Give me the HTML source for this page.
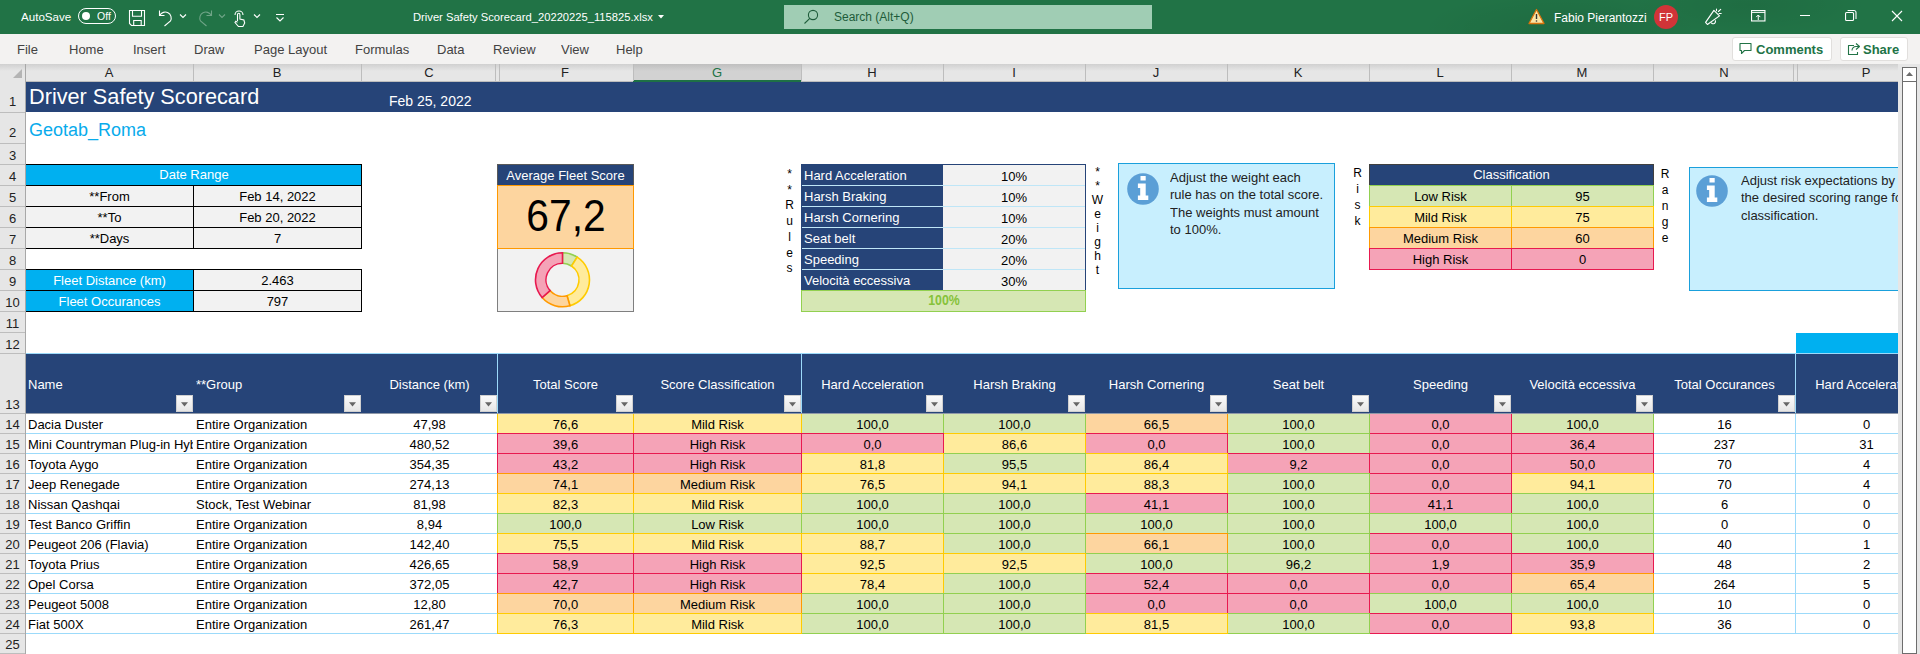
<!DOCTYPE html>
<html><head><meta charset="utf-8"><style>
html,body{margin:0;padding:0;}
body{width:1920px;height:654px;overflow:hidden;position:relative;background:#fff;font-family:"Liberation Sans", sans-serif;}
body div{position:absolute;box-sizing:border-box;}
.t{white-space:nowrap;overflow:hidden;font-size:13px;color:#000;}
svg{position:absolute;}
</style></head><body>
<div style="left:0px;top:0px;width:1920px;height:34px;background:#217346"></div><div style="left:1420px;top:0px;width:500px;height:34px;background:radial-gradient(ellipse 140px 40px at 140px 30px,rgba(0,0,0,.07),rgba(0,0,0,0) 100%),radial-gradient(ellipse 120px 30px at 330px 5px,rgba(0,0,0,.06),rgba(0,0,0,0) 100%)"></div><div class="t" style="left:21px;top:0px;width:60px;height:34px;line-height:34px;text-align:left;color:#ffffff;font-size:11.6px;line-height:34px">AutoSave</div><div style="left:78px;top:8px;width:38px;height:16px;border:1.3px solid #fff;border-radius:8px"></div><div style="left:82px;top:12px;width:8px;height:8px;background:#fff;border-radius:50%"></div><div class="t" style="left:97px;top:0px;width:20px;height:33px;line-height:33px;text-align:left;color:#ffffff;font-size:10.5px;line-height:33px">Off</div><svg style="left:128px;top:9px" width="18" height="18" viewBox="0 0 18 18"><path d="M1.5 1.5H16.5V16.5H3.5L1.5 14.5Z" fill="none" stroke="#fff" stroke-width="1.1"/><path d="M4.5 1.5V7.3H13.5V1.5M5.7 16.5V11.5H13.2V16.5" fill="none" stroke="#fff" stroke-width="1.1"/></svg><svg style="left:157px;top:9px" width="18" height="18" viewBox="0 0 18 18"><path d="M2.5 1.5v5h5" fill="none" stroke="#fff" stroke-width="1.1"/><path d="M2.8 6.3A6 6 0 1 1 13.5 12L7.5 17" fill="none" stroke="#fff" stroke-width="1.1"/></svg><svg style="left:179px;top:13px" width="8" height="6" viewBox="0 0 8 6"><path d="M1 1.5l3 3 3-3" fill="none" stroke="#fff" stroke-width="1.1"/></svg><svg style="left:196px;top:9px;opacity:.35" width="18" height="18" viewBox="0 0 18 18"><path d="M15.5 1.5v5h-5" fill="none" stroke="#fff" stroke-width="1.1"/><path d="M15.2 6.3A6 6 0 1 0 4.5 12L10.5 17" fill="none" stroke="#fff" stroke-width="1.1"/></svg><svg style="left:218px;top:13px;opacity:.35" width="8" height="6" viewBox="0 0 8 6"><path d="M1 1.5l3 3 3-3" fill="none" stroke="#fff" stroke-width="1.1"/></svg><svg style="left:232px;top:9px" width="16" height="18" viewBox="0 0 16 18"><path d="M3 6A4 4 0 0 1 11 6" fill="none" stroke="#fff" stroke-width="1.1"/><path d="M5.5 12V5.5a1.2 1.2 0 0 1 2.4 0V10l4 1 .8 3-1.8 3.5H6.5L3 13.5l.8-1.2 1.7 1" fill="none" stroke="#fff" stroke-width="1.1"/></svg><svg style="left:253px;top:13px" width="8" height="6" viewBox="0 0 8 6"><path d="M1 1.5l3 3 3-3" fill="none" stroke="#fff" stroke-width="1.1"/></svg><svg style="left:275px;top:13px" width="10" height="10" viewBox="0 0 10 10"><path d="M1 1.5h8M1.5 4.5l3.5 3.5 3.5-3.5" fill="none" stroke="#fff" stroke-width="1.1"/></svg><div class="t" style="left:413px;top:0px;width:250px;height:34px;line-height:34px;text-align:left;color:#ffffff;font-size:11.2px">Driver Safety Scorecard_20220225_115825.xlsx</div><svg style="left:658px;top:15px" width="6" height="4" viewBox="0 0 6 4"><path d="M0 0h6L3 3.5z" fill="#fff"/></svg><div style="left:784px;top:5px;width:368px;height:24px;background:#a0cdb4"></div><svg style="left:803px;top:9px" width="16" height="16" viewBox="0 0 16 16"><circle cx="10" cy="6" r="4.6" fill="none" stroke="#1e5c3a" stroke-width="1.1"/><path d="M6.8 9.3L1.5 14.5" stroke="#1e5c3a" stroke-width="1.1"/></svg><div class="t" style="left:834px;top:0px;width:100px;height:34px;line-height:34px;text-align:left;color:#1e5c3a;font-size:12px">Search (Alt+Q)</div><svg style="left:1528px;top:8px" width="17" height="17" viewBox="0 0 17 17"><path d="M8.5 1.5L16 15.5H1z" fill="#fbe5a5" stroke="#d9730d" stroke-width="1.3" stroke-linejoin="round"/><path d="M8.5 6v5" stroke="#333" stroke-width="1.4"/><circle cx="8.5" cy="13" r=".8" fill="#333"/></svg><div class="t" style="left:1554px;top:1px;width:100px;height:34px;line-height:34px;text-align:left;color:#ffffff;font-size:12px">Fabio Pierantozzi</div><div style="left:1654px;top:5px;width:24px;height:24px;background:#d13438;border-radius:50%"></div><div class="t" style="left:1654px;top:5px;width:24px;height:24px;line-height:24px;text-align:center;color:#fff;font-size:11px">FP</div><svg style="left:1700px;top:4px" width="28" height="26" viewBox="0 0 28 26"><path d="M5.6 18.3L13.9 6.4L19.5 11.9L7.4 20.5Z" fill="none" stroke="#fff" stroke-width="1.15" stroke-linejoin="round"/><path d="M11.2 18.6A2.2 2.2 0 0 0 15.2 16.4" fill="none" stroke="#fff" stroke-width="1.15"/><path d="M16.5 5V6.7M18.4 7.5L20.7 5.3M19.1 9.5H21.2" stroke="#fff" stroke-width="1.1" stroke-linecap="round"/></svg><svg style="left:1751px;top:10px" width="15" height="12" viewBox="0 0 15 12"><rect x=".55" y=".55" width="13.4" height="10.4" fill="none" stroke="#fff" stroke-width="1.1"/><path d="M.6 2.4h13.4M7.25 10V5.2M5.2 7.1L7.25 5L9.3 7.1" fill="none" stroke="#fff" stroke-width="1"/></svg><div style="left:1800px;top:15px;width:10px;height:1px;background:#fff"></div><svg style="left:1845px;top:10px" width="12" height="12" viewBox="0 0 12 12"><rect x=".55" y="2.55" width="8" height="8" rx="1" fill="none" stroke="#fff" stroke-width="1.1"/><path d="M2.6 .55h6.4a2 2 0 0 1 2 2v6.4" fill="none" stroke="#fff" stroke-width="1.1"/></svg><svg style="left:1891px;top:10px" width="12" height="12" viewBox="0 0 12 12"><path d="M1 1l10 10M11 1L1 11" stroke="#fff" stroke-width="1.1"/></svg><div style="left:0px;top:34px;width:1920px;height:30px;background:#f3f2f1"></div><div class="t" style="left:17px;top:34px;width:120px;height:30px;line-height:30px;text-align:left;color:#424242;font-size:13px;line-height:31px">File</div><div class="t" style="left:69px;top:34px;width:120px;height:30px;line-height:30px;text-align:left;color:#424242;font-size:13px;line-height:31px">Home</div><div class="t" style="left:133px;top:34px;width:120px;height:30px;line-height:30px;text-align:left;color:#424242;font-size:13px;line-height:31px">Insert</div><div class="t" style="left:194px;top:34px;width:120px;height:30px;line-height:30px;text-align:left;color:#424242;font-size:13px;line-height:31px">Draw</div><div class="t" style="left:254px;top:34px;width:120px;height:30px;line-height:30px;text-align:left;color:#424242;font-size:13px;line-height:31px">Page Layout</div><div class="t" style="left:355px;top:34px;width:120px;height:30px;line-height:30px;text-align:left;color:#424242;font-size:13px;line-height:31px">Formulas</div><div class="t" style="left:437px;top:34px;width:120px;height:30px;line-height:30px;text-align:left;color:#424242;font-size:13px;line-height:31px">Data</div><div class="t" style="left:493px;top:34px;width:120px;height:30px;line-height:30px;text-align:left;color:#424242;font-size:13px;line-height:31px">Review</div><div class="t" style="left:561px;top:34px;width:120px;height:30px;line-height:30px;text-align:left;color:#424242;font-size:13px;line-height:31px">View</div><div class="t" style="left:616px;top:34px;width:120px;height:30px;line-height:30px;text-align:left;color:#424242;font-size:13px;line-height:31px">Help</div><div style="left:1732px;top:37px;width:100px;height:24px;background:#fff;border:1px solid #e1dfdd;border-radius:3px"></div><svg style="left:1739px;top:42px" width="14" height="14" viewBox="0 0 14 14"><path d="M1 1.5h11v7H5.5L2.5 11.5V8.5H1z" fill="none" stroke="#217346" stroke-width="1.1" stroke-linejoin="round"/></svg><div class="t" style="left:1756px;top:38px;width:80px;height:23px;line-height:23px;text-align:left;color:#217346;font-size:13px;font-weight:bold">Comments</div><div style="left:1840px;top:37px;width:68px;height:24px;background:#fff;border:1px solid #e1dfdd;border-radius:3px"></div><svg style="left:1847px;top:42px" width="14" height="14" viewBox="0 0 14 14"><path d="M9 1.5l3.5 3-3.5 3M12.5 4.5H9a4 4 0 0 0-4 4M7 3.5H1.5v9h9V10" fill="none" stroke="#217346" stroke-width="1.1" stroke-linejoin="round"/></svg><div class="t" style="left:1863px;top:38px;width:50px;height:23px;line-height:23px;text-align:left;color:#217346;font-size:13px;font-weight:bold">Share</div><div style="left:0px;top:64px;width:1898px;height:18px;background:#e6e6e6;border-bottom:1px solid #bdbdbd"></div><div style="left:0px;top:64px;width:1898px;height:7px;background:linear-gradient(#d0d0d0,#e6e6e6)"></div><svg style="left:13px;top:69px" width="9" height="9" viewBox="0 0 9 9"><path d="M9 0V9H0z" fill="#b4b4b4"/></svg><div style="left:25px;top:64px;width:1px;height:17px;background:#bdbdbd"></div><div style="left:633px;top:64px;width:168px;height:17px;background:linear-gradient(#bfbfbf,#d2d2d2 7px)"></div><div style="left:633px;top:80px;width:168px;height:2px;background:#1e7145"></div><div class="t" style="left:25px;top:64px;width:168px;height:17px;line-height:17px;text-align:center;font-size:13px;color:#222;line-height:18px">A</div><div class="t" style="left:193px;top:64px;width:168px;height:17px;line-height:17px;text-align:center;font-size:13px;color:#222;line-height:18px">B</div><div style="left:193px;top:64px;width:1px;height:17px;background:#bdbdbd"></div><div class="t" style="left:361px;top:64px;width:136px;height:17px;line-height:17px;text-align:center;font-size:13px;color:#222;line-height:18px">C</div><div style="left:361px;top:64px;width:1px;height:17px;background:#bdbdbd"></div><div class="t" style="left:497px;top:64px;width:136px;height:17px;line-height:17px;text-align:center;font-size:13px;color:#222;line-height:18px">F</div><div class="t" style="left:633px;top:64px;width:168px;height:17px;line-height:17px;text-align:center;font-size:13px;color:#217346;line-height:18px">G</div><div style="left:633px;top:64px;width:1px;height:17px;background:#bdbdbd"></div><div class="t" style="left:801px;top:64px;width:142px;height:17px;line-height:17px;text-align:center;font-size:13px;color:#222;line-height:18px">H</div><div style="left:801px;top:64px;width:1px;height:17px;background:#bdbdbd"></div><div class="t" style="left:943px;top:64px;width:142px;height:17px;line-height:17px;text-align:center;font-size:13px;color:#222;line-height:18px">I</div><div style="left:943px;top:64px;width:1px;height:17px;background:#bdbdbd"></div><div class="t" style="left:1085px;top:64px;width:142px;height:17px;line-height:17px;text-align:center;font-size:13px;color:#222;line-height:18px">J</div><div style="left:1085px;top:64px;width:1px;height:17px;background:#bdbdbd"></div><div class="t" style="left:1227px;top:64px;width:142px;height:17px;line-height:17px;text-align:center;font-size:13px;color:#222;line-height:18px">K</div><div style="left:1227px;top:64px;width:1px;height:17px;background:#bdbdbd"></div><div class="t" style="left:1369px;top:64px;width:142px;height:17px;line-height:17px;text-align:center;font-size:13px;color:#222;line-height:18px">L</div><div style="left:1369px;top:64px;width:1px;height:17px;background:#bdbdbd"></div><div class="t" style="left:1511px;top:64px;width:142px;height:17px;line-height:17px;text-align:center;font-size:13px;color:#222;line-height:18px">M</div><div style="left:1511px;top:64px;width:1px;height:17px;background:#bdbdbd"></div><div class="t" style="left:1653px;top:64px;width:142px;height:17px;line-height:17px;text-align:center;font-size:13px;color:#222;line-height:18px">N</div><div style="left:1653px;top:64px;width:1px;height:17px;background:#bdbdbd"></div><div class="t" style="left:1795px;top:64px;width:142px;height:17px;line-height:17px;text-align:center;font-size:13px;color:#222;line-height:18px">P</div><div style="left:495px;top:64px;width:1px;height:17px;background:#bdbdbd"></div><div style="left:499px;top:64px;width:1px;height:17px;background:#bdbdbd"></div><div style="left:1793px;top:64px;width:1px;height:17px;background:#bdbdbd"></div><div style="left:1797px;top:64px;width:1px;height:17px;background:#bdbdbd"></div><div style="left:0px;top:81px;width:26px;height:573px;background:#e6e6e6;border-right:1px solid #bdbdbd"></div><div style="left:0px;top:112px;width:25px;height:1px;background:#bdbdbd"></div><div class="t" style="left:0px;top:81px;width:25px;height:31px;line-height:31px;text-align:left;font-size:13px;color:#222;text-align:center;line-height:normal;display:flex;align-items:flex-end;justify-content:center;padding-bottom:3px">1</div><div style="left:0px;top:143px;width:25px;height:1px;background:#bdbdbd"></div><div class="t" style="left:0px;top:112px;width:25px;height:31px;line-height:31px;text-align:left;font-size:13px;color:#222;text-align:center;line-height:normal;display:flex;align-items:flex-end;justify-content:center;padding-bottom:3px">2</div><div style="left:0px;top:164px;width:25px;height:1px;background:#bdbdbd"></div><div class="t" style="left:0px;top:143px;width:25px;height:21px;line-height:21px;text-align:left;font-size:13px;color:#222;text-align:center;line-height:normal;display:flex;align-items:flex-end;justify-content:center;padding-bottom:1px">3</div><div style="left:0px;top:185px;width:25px;height:1px;background:#bdbdbd"></div><div class="t" style="left:0px;top:164px;width:25px;height:21px;line-height:21px;text-align:left;font-size:13px;color:#222;text-align:center;line-height:normal;display:flex;align-items:flex-end;justify-content:center;padding-bottom:1px">4</div><div style="left:0px;top:206px;width:25px;height:1px;background:#bdbdbd"></div><div class="t" style="left:0px;top:185px;width:25px;height:21px;line-height:21px;text-align:left;font-size:13px;color:#222;text-align:center;line-height:normal;display:flex;align-items:flex-end;justify-content:center;padding-bottom:1px">5</div><div style="left:0px;top:227px;width:25px;height:1px;background:#bdbdbd"></div><div class="t" style="left:0px;top:206px;width:25px;height:21px;line-height:21px;text-align:left;font-size:13px;color:#222;text-align:center;line-height:normal;display:flex;align-items:flex-end;justify-content:center;padding-bottom:1px">6</div><div style="left:0px;top:248px;width:25px;height:1px;background:#bdbdbd"></div><div class="t" style="left:0px;top:227px;width:25px;height:21px;line-height:21px;text-align:left;font-size:13px;color:#222;text-align:center;line-height:normal;display:flex;align-items:flex-end;justify-content:center;padding-bottom:1px">7</div><div style="left:0px;top:269px;width:25px;height:1px;background:#bdbdbd"></div><div class="t" style="left:0px;top:248px;width:25px;height:21px;line-height:21px;text-align:left;font-size:13px;color:#222;text-align:center;line-height:normal;display:flex;align-items:flex-end;justify-content:center;padding-bottom:1px">8</div><div style="left:0px;top:290px;width:25px;height:1px;background:#bdbdbd"></div><div class="t" style="left:0px;top:269px;width:25px;height:21px;line-height:21px;text-align:left;font-size:13px;color:#222;text-align:center;line-height:normal;display:flex;align-items:flex-end;justify-content:center;padding-bottom:1px">9</div><div style="left:0px;top:311px;width:25px;height:1px;background:#bdbdbd"></div><div class="t" style="left:0px;top:290px;width:25px;height:21px;line-height:21px;text-align:left;font-size:13px;color:#222;text-align:center;line-height:normal;display:flex;align-items:flex-end;justify-content:center;padding-bottom:1px">10</div><div style="left:0px;top:332px;width:25px;height:1px;background:#bdbdbd"></div><div class="t" style="left:0px;top:311px;width:25px;height:21px;line-height:21px;text-align:left;font-size:13px;color:#222;text-align:center;line-height:normal;display:flex;align-items:flex-end;justify-content:center;padding-bottom:1px">11</div><div style="left:0px;top:353px;width:25px;height:1px;background:#bdbdbd"></div><div class="t" style="left:0px;top:332px;width:25px;height:21px;line-height:21px;text-align:left;font-size:13px;color:#222;text-align:center;line-height:normal;display:flex;align-items:flex-end;justify-content:center;padding-bottom:1px">12</div><div style="left:0px;top:413px;width:25px;height:1px;background:#bdbdbd"></div><div class="t" style="left:0px;top:353px;width:25px;height:60px;line-height:60px;text-align:left;font-size:13px;color:#222;text-align:center;line-height:normal;display:flex;align-items:flex-end;justify-content:center;padding-bottom:1px">13</div><div style="left:0px;top:433px;width:25px;height:1px;background:#bdbdbd"></div><div class="t" style="left:0px;top:413px;width:25px;height:20px;line-height:20px;text-align:left;font-size:13px;color:#222;text-align:center;line-height:normal;display:flex;align-items:flex-end;justify-content:center;padding-bottom:1px">14</div><div style="left:0px;top:453px;width:25px;height:1px;background:#bdbdbd"></div><div class="t" style="left:0px;top:433px;width:25px;height:20px;line-height:20px;text-align:left;font-size:13px;color:#222;text-align:center;line-height:normal;display:flex;align-items:flex-end;justify-content:center;padding-bottom:1px">15</div><div style="left:0px;top:473px;width:25px;height:1px;background:#bdbdbd"></div><div class="t" style="left:0px;top:453px;width:25px;height:20px;line-height:20px;text-align:left;font-size:13px;color:#222;text-align:center;line-height:normal;display:flex;align-items:flex-end;justify-content:center;padding-bottom:1px">16</div><div style="left:0px;top:493px;width:25px;height:1px;background:#bdbdbd"></div><div class="t" style="left:0px;top:473px;width:25px;height:20px;line-height:20px;text-align:left;font-size:13px;color:#222;text-align:center;line-height:normal;display:flex;align-items:flex-end;justify-content:center;padding-bottom:1px">17</div><div style="left:0px;top:513px;width:25px;height:1px;background:#bdbdbd"></div><div class="t" style="left:0px;top:493px;width:25px;height:20px;line-height:20px;text-align:left;font-size:13px;color:#222;text-align:center;line-height:normal;display:flex;align-items:flex-end;justify-content:center;padding-bottom:1px">18</div><div style="left:0px;top:533px;width:25px;height:1px;background:#bdbdbd"></div><div class="t" style="left:0px;top:513px;width:25px;height:20px;line-height:20px;text-align:left;font-size:13px;color:#222;text-align:center;line-height:normal;display:flex;align-items:flex-end;justify-content:center;padding-bottom:1px">19</div><div style="left:0px;top:553px;width:25px;height:1px;background:#bdbdbd"></div><div class="t" style="left:0px;top:533px;width:25px;height:20px;line-height:20px;text-align:left;font-size:13px;color:#222;text-align:center;line-height:normal;display:flex;align-items:flex-end;justify-content:center;padding-bottom:1px">20</div><div style="left:0px;top:573px;width:25px;height:1px;background:#bdbdbd"></div><div class="t" style="left:0px;top:553px;width:25px;height:20px;line-height:20px;text-align:left;font-size:13px;color:#222;text-align:center;line-height:normal;display:flex;align-items:flex-end;justify-content:center;padding-bottom:1px">21</div><div style="left:0px;top:593px;width:25px;height:1px;background:#bdbdbd"></div><div class="t" style="left:0px;top:573px;width:25px;height:20px;line-height:20px;text-align:left;font-size:13px;color:#222;text-align:center;line-height:normal;display:flex;align-items:flex-end;justify-content:center;padding-bottom:1px">22</div><div style="left:0px;top:613px;width:25px;height:1px;background:#bdbdbd"></div><div class="t" style="left:0px;top:593px;width:25px;height:20px;line-height:20px;text-align:left;font-size:13px;color:#222;text-align:center;line-height:normal;display:flex;align-items:flex-end;justify-content:center;padding-bottom:1px">23</div><div style="left:0px;top:633px;width:25px;height:1px;background:#bdbdbd"></div><div class="t" style="left:0px;top:613px;width:25px;height:20px;line-height:20px;text-align:left;font-size:13px;color:#222;text-align:center;line-height:normal;display:flex;align-items:flex-end;justify-content:center;padding-bottom:1px">24</div><div style="left:0px;top:653px;width:25px;height:1px;background:#bdbdbd"></div><div class="t" style="left:0px;top:633px;width:25px;height:20px;line-height:20px;text-align:left;font-size:13px;color:#222;text-align:center;line-height:normal;display:flex;align-items:flex-end;justify-content:center;padding-bottom:1px">25</div><div style="left:1898px;top:64px;width:22px;height:590px;background:#e6e6e6"></div><div style="left:1902px;top:67px;width:15px;height:587px;background:#fff;border:1px solid #6d6d6d"></div><div style="left:1902px;top:81px;width:15px;height:1px;background:#6d6d6d"></div><svg style="left:1906px;top:72px" width="7" height="4" viewBox="0 0 7 4"><path d="M0 4L3.5 0L7 4z" fill="#6d6d6d"/></svg><div style="left:26px;top:82px;width:1872px;height:30px;background:#264478"></div><div class="t" style="left:29.00px;top:80.48px;width:600px;height:34px;line-height:34px;font-size:21.7px;text-align:left;color:#fff">Driver Safety Scorecard</div><div class="t" style="left:389.00px;top:90.15px;width:600px;height:22px;line-height:22px;font-size:14px;text-align:left;color:#fff">Feb 25, 2022</div><div class="t" style="left:29.00px;top:116.26px;width:600px;height:28px;line-height:28px;font-size:18px;text-align:left;color:#08abec">Geotab_Roma</div><div style="left:25px;top:164px;width:337px;height:22px;background:#00b0f0;border:1px solid #000"></div><div class="t" style="left:94.00px;top:165.10px;width:200px;height:20px;line-height:20px;font-size:13px;text-align:center;color:#fff">Date Range</div><div style="left:25px;top:185px;width:169px;height:22px;background:#f2f2f2;border:1px solid #000"></div><div style="left:193px;top:185px;width:169px;height:22px;background:#f2f2f2;border:1px solid #000"></div><div class="t" style="left:29.50px;top:187.10px;width:160px;height:20px;line-height:20px;font-size:13px;text-align:center;">**From</div><div class="t" style="left:197.50px;top:187.10px;width:160px;height:20px;line-height:20px;font-size:13px;text-align:center;">Feb 14, 2022</div><div style="left:25px;top:206px;width:169px;height:22px;background:#f2f2f2;border:1px solid #000"></div><div style="left:193px;top:206px;width:169px;height:22px;background:#f2f2f2;border:1px solid #000"></div><div class="t" style="left:29.50px;top:208.10px;width:160px;height:20px;line-height:20px;font-size:13px;text-align:center;">**To</div><div class="t" style="left:197.50px;top:208.10px;width:160px;height:20px;line-height:20px;font-size:13px;text-align:center;">Feb 20, 2022</div><div style="left:25px;top:227px;width:169px;height:22px;background:#f2f2f2;border:1px solid #000"></div><div style="left:193px;top:227px;width:169px;height:22px;background:#f2f2f2;border:1px solid #000"></div><div class="t" style="left:29.50px;top:229.10px;width:160px;height:20px;line-height:20px;font-size:13px;text-align:center;">**Days</div><div class="t" style="left:197.50px;top:229.10px;width:160px;height:20px;line-height:20px;font-size:13px;text-align:center;">7</div><div style="left:25px;top:269px;width:169px;height:22px;background:#00b0f0;border:1px solid #000"></div><div style="left:193px;top:269px;width:169px;height:22px;background:#f2f2f2;border:1px solid #000"></div><div class="t" style="left:29.50px;top:271.10px;width:160px;height:20px;line-height:20px;font-size:13px;text-align:center;color:#fff">Fleet Distance (km)</div><div class="t" style="left:197.50px;top:271.10px;width:160px;height:20px;line-height:20px;font-size:13px;text-align:center;">2.463</div><div style="left:25px;top:290px;width:169px;height:22px;background:#00b0f0;border:1px solid #000"></div><div style="left:193px;top:290px;width:169px;height:22px;background:#f2f2f2;border:1px solid #000"></div><div class="t" style="left:29.50px;top:292.10px;width:160px;height:20px;line-height:20px;font-size:13px;text-align:center;color:#fff">Fleet Occurances</div><div class="t" style="left:197.50px;top:292.10px;width:160px;height:20px;line-height:20px;font-size:13px;text-align:center;">797</div><div style="left:497px;top:164px;width:137px;height:22px;background:#264478;border:1px solid #595959"></div><div class="t" style="left:497.50px;top:165.70px;width:136px;height:20px;line-height:20px;font-size:13px;text-align:center;color:#fff">Average Fleet Score</div><div style="left:497px;top:185px;width:137px;height:64px;background:#fdd59f;border:1px solid #ff9900"></div><div class="t" style="left:498.00px;top:180.41px;width:136px;height:72px;line-height:72px;font-size:45px;text-align:center;color:#000;transform:scaleX(.905)">67,2</div><div style="left:497px;top:249px;width:137px;height:63px;background:#f2f2f2;border:1px solid #7f7f7f;border-top:none"></div><svg style="left:530px;top:248px" width="64" height="64" viewBox="0 0 64 64"><path d="M32.50 4.80A27 27 0 0 1 47.21 9.16L41.49 17.96A16.5 16.5 0 0 0 32.50 15.30Z" fill="#d6e7b4" stroke="#92d050" stroke-width="1.6"/><path d="M47.21 9.16A27 27 0 0 1 39.94 57.75L37.05 47.66A16.5 16.5 0 0 0 41.49 17.96Z" fill="#ffeb9c" stroke="#ffcb00" stroke-width="1.6"/><path d="M39.94 57.75A27 27 0 0 1 12.12 49.51L20.05 42.62A16.5 16.5 0 0 0 37.05 47.66Z" fill="#fdd59f" stroke="#ff9900" stroke-width="1.6"/><path d="M12.12 49.51A27 27 0 0 1 32.50 4.80L32.50 15.30A16.5 16.5 0 0 0 20.05 42.62Z" fill="#f5a3b7" stroke="#e8194f" stroke-width="1.6"/></svg><div style="left:801px;top:164px;width:285px;height:127px;background:#f2f2f2;border:1px solid #264478"></div><div style="left:801px;top:164px;width:142px;height:22px;background:#264478"></div><div class="t" style="left:804.00px;top:165.70px;width:600px;height:20px;line-height:20px;font-size:13px;text-align:left;color:#fff">Hard Acceleration</div><div class="t" style="left:944.00px;top:166.50px;width:140px;height:20px;line-height:20px;font-size:13px;text-align:center;">10%</div><div style="left:801px;top:185px;width:142px;height:22px;background:#264478"></div><div style="left:802px;top:185px;width:283px;height:1px;background:#bfe6f7"></div><div class="t" style="left:804.00px;top:186.70px;width:600px;height:20px;line-height:20px;font-size:13px;text-align:left;color:#fff">Harsh Braking</div><div class="t" style="left:944.00px;top:187.50px;width:140px;height:20px;line-height:20px;font-size:13px;text-align:center;">10%</div><div style="left:801px;top:206px;width:142px;height:22px;background:#264478"></div><div style="left:802px;top:206px;width:283px;height:1px;background:#bfe6f7"></div><div class="t" style="left:804.00px;top:207.70px;width:600px;height:20px;line-height:20px;font-size:13px;text-align:left;color:#fff">Harsh Cornering</div><div class="t" style="left:944.00px;top:208.50px;width:140px;height:20px;line-height:20px;font-size:13px;text-align:center;">10%</div><div style="left:801px;top:227px;width:142px;height:22px;background:#264478"></div><div style="left:802px;top:227px;width:283px;height:1px;background:#bfe6f7"></div><div class="t" style="left:804.00px;top:228.70px;width:600px;height:20px;line-height:20px;font-size:13px;text-align:left;color:#fff">Seat belt</div><div class="t" style="left:944.00px;top:229.50px;width:140px;height:20px;line-height:20px;font-size:13px;text-align:center;">20%</div><div style="left:801px;top:248px;width:142px;height:22px;background:#264478"></div><div style="left:802px;top:248px;width:283px;height:1px;background:#bfe6f7"></div><div class="t" style="left:804.00px;top:249.70px;width:600px;height:20px;line-height:20px;font-size:13px;text-align:left;color:#fff">Speeding</div><div class="t" style="left:944.00px;top:250.50px;width:140px;height:20px;line-height:20px;font-size:13px;text-align:center;">20%</div><div style="left:801px;top:269px;width:142px;height:22px;background:#264478"></div><div style="left:802px;top:269px;width:283px;height:1px;background:#bfe6f7"></div><div class="t" style="left:804.00px;top:270.70px;width:600px;height:20px;line-height:20px;font-size:13px;text-align:left;color:#fff">Velocità eccessiva</div><div class="t" style="left:944.00px;top:271.50px;width:140px;height:20px;line-height:20px;font-size:13px;text-align:center;">30%</div><div style="left:801px;top:290px;width:285px;height:22px;background:#d6e7b4;border:1px solid #92d050"></div><div class="t" style="left:874.00px;top:288.75px;width:140px;height:22px;line-height:22px;font-size:14px;text-align:center;color:#86c23a;font-weight:bold;transform:scaleX(.88)">100%</div><div class="t" style="left:779.50px;top:164.94px;width:20px;height:19px;line-height:19px;font-size:12px;text-align:center;">*</div><div class="t" style="left:779.50px;top:180.69px;width:20px;height:19px;line-height:19px;font-size:12px;text-align:center;">*</div><div class="t" style="left:779.50px;top:196.44px;width:20px;height:19px;line-height:19px;font-size:12px;text-align:center;">R</div><div class="t" style="left:779.50px;top:212.19px;width:20px;height:19px;line-height:19px;font-size:12px;text-align:center;">u</div><div class="t" style="left:779.50px;top:227.94px;width:20px;height:19px;line-height:19px;font-size:12px;text-align:center;">l</div><div class="t" style="left:779.50px;top:243.69px;width:20px;height:19px;line-height:19px;font-size:12px;text-align:center;">e</div><div class="t" style="left:779.50px;top:259.44px;width:20px;height:19px;line-height:19px;font-size:12px;text-align:center;">s</div><div class="t" style="left:1087.50px;top:163.34px;width:20px;height:19px;line-height:19px;font-size:12px;text-align:center;">*</div><div class="t" style="left:1087.50px;top:177.34px;width:20px;height:19px;line-height:19px;font-size:12px;text-align:center;">*</div><div class="t" style="left:1087.50px;top:191.34px;width:20px;height:19px;line-height:19px;font-size:12px;text-align:center;">W</div><div class="t" style="left:1087.50px;top:205.34px;width:20px;height:19px;line-height:19px;font-size:12px;text-align:center;">e</div><div class="t" style="left:1087.50px;top:219.34px;width:20px;height:19px;line-height:19px;font-size:12px;text-align:center;">i</div><div class="t" style="left:1087.50px;top:233.34px;width:20px;height:19px;line-height:19px;font-size:12px;text-align:center;">g</div><div class="t" style="left:1087.50px;top:247.34px;width:20px;height:19px;line-height:19px;font-size:12px;text-align:center;">h</div><div class="t" style="left:1087.50px;top:261.34px;width:20px;height:19px;line-height:19px;font-size:12px;text-align:center;">t</div><div style="left:1118px;top:163px;width:217px;height:126px;background:#c8effe;border:1.5px solid #1aa0dc"></div><svg style="left:1127.2px;top:172.5px" width="32" height="32" viewBox="0 0 32 32"><circle cx="16" cy="16" r="15.8" fill="#5b9fd6"/><path d="M10.9 10.6H18.7V22.5H21.3V26.9H10.9V22.5H13.2V14.9H10.9Z" fill="#fff"/><rect x="13.5" y="3" width="5.2" height="4.5" fill="#fff"/></svg><div class="t" style="left:1170.00px;top:167.50px;width:600px;height:20px;line-height:20px;font-size:13px;text-align:left;color:#222">Adjust the weight each</div><div class="t" style="left:1170.00px;top:185.10px;width:600px;height:20px;line-height:20px;font-size:13px;text-align:left;color:#222">rule has on the total score.</div><div class="t" style="left:1170.00px;top:202.70px;width:600px;height:20px;line-height:20px;font-size:13px;text-align:left;color:#222">The weights must amount</div><div class="t" style="left:1170.00px;top:220.30px;width:600px;height:20px;line-height:20px;font-size:13px;text-align:left;color:#222">to 100%.</div><div class="t" style="left:1347.50px;top:164.24px;width:20px;height:19px;line-height:19px;font-size:12px;text-align:center;">R</div><div class="t" style="left:1347.50px;top:180.14px;width:20px;height:19px;line-height:19px;font-size:12px;text-align:center;">i</div><div class="t" style="left:1347.50px;top:196.04px;width:20px;height:19px;line-height:19px;font-size:12px;text-align:center;">s</div><div class="t" style="left:1347.50px;top:211.94px;width:20px;height:19px;line-height:19px;font-size:12px;text-align:center;">k</div><div class="t" style="left:1655.00px;top:164.84px;width:20px;height:19px;line-height:19px;font-size:12px;text-align:center;">R</div><div class="t" style="left:1655.00px;top:180.84px;width:20px;height:19px;line-height:19px;font-size:12px;text-align:center;">a</div><div class="t" style="left:1655.00px;top:196.84px;width:20px;height:19px;line-height:19px;font-size:12px;text-align:center;">n</div><div class="t" style="left:1655.00px;top:212.84px;width:20px;height:19px;line-height:19px;font-size:12px;text-align:center;">g</div><div class="t" style="left:1655.00px;top:228.84px;width:20px;height:19px;line-height:19px;font-size:12px;text-align:center;">e</div><div style="left:1689px;top:167px;width:209px;height:124px;overflow:hidden"><div style="left:0;top:0;width:300px;height:124px;background:#c8effe;border:1.5px solid #1aa0dc"></div><svg style="left:7px;top:7.5px" width="32" height="32" viewBox="0 0 32 32"><circle cx="16" cy="16" r="15.8" fill="#5b9fd6"/><path d="M10.9 10.6H18.7V22.5H21.3V26.9H10.9V22.5H13.2V14.9H10.9Z" fill="#fff"/><rect x="13.5" y="3" width="5.2" height="4.5" fill="#fff"/></svg><div class="t" style="left:52.00px;top:3.70px;width:600px;height:20px;line-height:20px;font-size:13px;text-align:left;color:#222">Adjust risk expectations by setting</div><div class="t" style="left:52.00px;top:21.30px;width:600px;height:20px;line-height:20px;font-size:13px;text-align:left;color:#222">the desired scoring range for each</div><div class="t" style="left:52.00px;top:38.90px;width:600px;height:20px;line-height:20px;font-size:13px;text-align:left;color:#222">classification.</div></div><div style="left:1369px;top:164px;width:285px;height:22px;background:#264478;border:1px solid #404040"></div><div class="t" style="left:1411.50px;top:165.20px;width:200px;height:20px;line-height:20px;font-size:13px;text-align:center;color:#fff">Classification</div><div style="left:1369px;top:185px;width:143px;height:22px;background:#d6e7b4;border:1px solid #92d050"></div><div style="left:1511px;top:185px;width:143px;height:22px;background:#d6e7b4;border:1px solid #92d050"></div><div class="t" style="left:1370.50px;top:187.20px;width:140px;height:20px;line-height:20px;font-size:13px;text-align:center;">Low Risk</div><div class="t" style="left:1512.50px;top:187.20px;width:140px;height:20px;line-height:20px;font-size:13px;text-align:center;">95</div><div style="left:1369px;top:206px;width:143px;height:22px;background:#ffeb9c;border:1px solid #ffcb00"></div><div style="left:1511px;top:206px;width:143px;height:22px;background:#ffeb9c;border:1px solid #ffcb00"></div><div class="t" style="left:1370.50px;top:208.20px;width:140px;height:20px;line-height:20px;font-size:13px;text-align:center;">Mild Risk</div><div class="t" style="left:1512.50px;top:208.20px;width:140px;height:20px;line-height:20px;font-size:13px;text-align:center;">75</div><div style="left:1369px;top:227px;width:143px;height:22px;background:#fdd59f;border:1px solid #ff9900"></div><div style="left:1511px;top:227px;width:143px;height:22px;background:#fdd59f;border:1px solid #ff9900"></div><div class="t" style="left:1370.50px;top:229.20px;width:140px;height:20px;line-height:20px;font-size:13px;text-align:center;">Medium Risk</div><div class="t" style="left:1512.50px;top:229.20px;width:140px;height:20px;line-height:20px;font-size:13px;text-align:center;">60</div><div style="left:1369px;top:248px;width:143px;height:22px;background:#f5a3b7;border:1px solid #e8194f"></div><div style="left:1511px;top:248px;width:143px;height:22px;background:#f5a3b7;border:1px solid #e8194f"></div><div class="t" style="left:1370.50px;top:250.20px;width:140px;height:20px;line-height:20px;font-size:13px;text-align:center;">High Risk</div><div class="t" style="left:1512.50px;top:250.20px;width:140px;height:20px;line-height:20px;font-size:13px;text-align:center;">0</div><div style="left:1796px;top:333px;width:102px;height:20px;background:#00b0f0"></div><div style="left:0;top:0;width:1898px;height:654px;overflow:hidden"><div style="left:25px;top:353px;width:1873px;height:60px;background:#264478"></div><div style="left:25px;top:353px;width:1873px;height:1px;background:#9cdafa"></div><div style="left:497px;top:353px;width:1px;height:60px;background:#9cdafa"></div><div style="left:801px;top:353px;width:1px;height:60px;background:#9cdafa"></div><div style="left:1795px;top:353px;width:1px;height:60px;background:#9cdafa"></div><div class="t" style="left:28.00px;top:374.80px;width:600px;height:20px;line-height:20px;font-size:13px;text-align:left;color:#fff">Name</div><div style="left:176px;top:395px;width:17px;height:17px;background:linear-gradient(#fbfbfb,#e6e6e6);border:1px solid #d0d0d0"></div><svg style="left:181px;top:401.5px" width="7" height="5" viewBox="0 0 7 5"><path d="M0 .3h7L3.5 4.6z" fill="#666"/></svg><div class="t" style="left:196.00px;top:374.80px;width:600px;height:20px;line-height:20px;font-size:13px;text-align:left;color:#fff">**Group</div><div style="left:344px;top:395px;width:17px;height:17px;background:linear-gradient(#fbfbfb,#e6e6e6);border:1px solid #d0d0d0"></div><svg style="left:349px;top:401.5px" width="7" height="5" viewBox="0 0 7 5"><path d="M0 .3h7L3.5 4.6z" fill="#666"/></svg><div class="t" style="left:361.50px;top:374.80px;width:136px;height:20px;line-height:20px;font-size:13px;text-align:center;color:#fff">Distance (km)</div><div style="left:480px;top:395px;width:17px;height:17px;background:linear-gradient(#fbfbfb,#e6e6e6);border:1px solid #d0d0d0"></div><svg style="left:485px;top:401.5px" width="7" height="5" viewBox="0 0 7 5"><path d="M0 .3h7L3.5 4.6z" fill="#666"/></svg><div class="t" style="left:497.50px;top:374.80px;width:136px;height:20px;line-height:20px;font-size:13px;text-align:center;color:#fff">Total Score</div><div style="left:616px;top:395px;width:17px;height:17px;background:linear-gradient(#fbfbfb,#e6e6e6);border:1px solid #d0d0d0"></div><svg style="left:621px;top:401.5px" width="7" height="5" viewBox="0 0 7 5"><path d="M0 .3h7L3.5 4.6z" fill="#666"/></svg><div class="t" style="left:633.50px;top:374.80px;width:168px;height:20px;line-height:20px;font-size:13px;text-align:center;color:#fff">Score Classification</div><div style="left:784px;top:395px;width:17px;height:17px;background:linear-gradient(#fbfbfb,#e6e6e6);border:1px solid #d0d0d0"></div><svg style="left:789px;top:401.5px" width="7" height="5" viewBox="0 0 7 5"><path d="M0 .3h7L3.5 4.6z" fill="#666"/></svg><div class="t" style="left:801.50px;top:374.80px;width:142px;height:20px;line-height:20px;font-size:13px;text-align:center;color:#fff">Hard Acceleration</div><div style="left:926px;top:395px;width:17px;height:17px;background:linear-gradient(#fbfbfb,#e6e6e6);border:1px solid #d0d0d0"></div><svg style="left:931px;top:401.5px" width="7" height="5" viewBox="0 0 7 5"><path d="M0 .3h7L3.5 4.6z" fill="#666"/></svg><div class="t" style="left:943.50px;top:374.80px;width:142px;height:20px;line-height:20px;font-size:13px;text-align:center;color:#fff">Harsh Braking</div><div style="left:1068px;top:395px;width:17px;height:17px;background:linear-gradient(#fbfbfb,#e6e6e6);border:1px solid #d0d0d0"></div><svg style="left:1073px;top:401.5px" width="7" height="5" viewBox="0 0 7 5"><path d="M0 .3h7L3.5 4.6z" fill="#666"/></svg><div class="t" style="left:1085.50px;top:374.80px;width:142px;height:20px;line-height:20px;font-size:13px;text-align:center;color:#fff">Harsh Cornering</div><div style="left:1210px;top:395px;width:17px;height:17px;background:linear-gradient(#fbfbfb,#e6e6e6);border:1px solid #d0d0d0"></div><svg style="left:1215px;top:401.5px" width="7" height="5" viewBox="0 0 7 5"><path d="M0 .3h7L3.5 4.6z" fill="#666"/></svg><div class="t" style="left:1227.50px;top:374.80px;width:142px;height:20px;line-height:20px;font-size:13px;text-align:center;color:#fff">Seat belt</div><div style="left:1352px;top:395px;width:17px;height:17px;background:linear-gradient(#fbfbfb,#e6e6e6);border:1px solid #d0d0d0"></div><svg style="left:1357px;top:401.5px" width="7" height="5" viewBox="0 0 7 5"><path d="M0 .3h7L3.5 4.6z" fill="#666"/></svg><div class="t" style="left:1369.50px;top:374.80px;width:142px;height:20px;line-height:20px;font-size:13px;text-align:center;color:#fff">Speeding</div><div style="left:1494px;top:395px;width:17px;height:17px;background:linear-gradient(#fbfbfb,#e6e6e6);border:1px solid #d0d0d0"></div><svg style="left:1499px;top:401.5px" width="7" height="5" viewBox="0 0 7 5"><path d="M0 .3h7L3.5 4.6z" fill="#666"/></svg><div class="t" style="left:1511.50px;top:374.80px;width:142px;height:20px;line-height:20px;font-size:13px;text-align:center;color:#fff">Velocità eccessiva</div><div style="left:1636px;top:395px;width:17px;height:17px;background:linear-gradient(#fbfbfb,#e6e6e6);border:1px solid #d0d0d0"></div><svg style="left:1641px;top:401.5px" width="7" height="5" viewBox="0 0 7 5"><path d="M0 .3h7L3.5 4.6z" fill="#666"/></svg><div class="t" style="left:1653.50px;top:374.80px;width:142px;height:20px;line-height:20px;font-size:13px;text-align:center;color:#fff">Total Occurances</div><div style="left:1778px;top:395px;width:17px;height:17px;background:linear-gradient(#fbfbfb,#e6e6e6);border:1px solid #d0d0d0"></div><svg style="left:1783px;top:401.5px" width="7" height="5" viewBox="0 0 7 5"><path d="M0 .3h7L3.5 4.6z" fill="#666"/></svg><div class="t" style="left:1795.50px;top:374.80px;width:142px;height:20px;line-height:20px;font-size:13px;text-align:center;color:#fff">Hard Acceleration</div><div style="left:25px;top:433px;width:472px;height:1px;background:#9cdafa"></div><div style="left:1653px;top:433px;width:245px;height:1px;background:#9cdafa"></div><div style="left:497px;top:413px;width:1px;height:21px;background:#9cdafa"></div><div style="left:1795px;top:413px;width:1px;height:21px;background:#9cdafa"></div><div class="t" style="left:26px;top:413px;width:167px;height:20px;line-height:20px"></div><div class="t" style="left:28.00px;top:415.40px;width:165px;height:20px;line-height:20px;font-size:13px;text-align:left;width:165px;overflow:hidden">Dacia Duster</div><div class="t" style="left:196.00px;top:415.40px;width:165px;height:20px;line-height:20px;font-size:13px;text-align:left;">Entire Organization</div><div class="t" style="left:361.50px;top:415.40px;width:136px;height:20px;line-height:20px;font-size:13px;text-align:center;">47,98</div><div style="left:1511px;top:413px;width:143px;height:21px;background:#d6e7b4;border:1px solid #92d050"></div><div style="left:1369px;top:413px;width:143px;height:21px;background:#f5a3b7;border:1px solid #e8194f"></div><div style="left:1227px;top:413px;width:143px;height:21px;background:#d6e7b4;border:1px solid #92d050"></div><div style="left:1085px;top:413px;width:143px;height:21px;background:#fdd59f;border:1px solid #ff9900"></div><div style="left:943px;top:413px;width:143px;height:21px;background:#d6e7b4;border:1px solid #92d050"></div><div style="left:801px;top:413px;width:143px;height:21px;background:#d6e7b4;border:1px solid #92d050"></div><div style="left:633px;top:413px;width:169px;height:21px;background:#ffeb9c;border:1px solid #ffcb00"></div><div style="left:497px;top:413px;width:137px;height:21px;background:#ffeb9c;border:1px solid #ffcb00"></div><div class="t" style="left:497.50px;top:415.40px;width:136px;height:20px;line-height:20px;font-size:13px;text-align:center;">76,6</div><div class="t" style="left:633.50px;top:415.40px;width:168px;height:20px;line-height:20px;font-size:13px;text-align:center;">Mild Risk</div><div class="t" style="left:801.50px;top:415.40px;width:142px;height:20px;line-height:20px;font-size:13px;text-align:center;">100,0</div><div class="t" style="left:943.50px;top:415.40px;width:142px;height:20px;line-height:20px;font-size:13px;text-align:center;">100,0</div><div class="t" style="left:1085.50px;top:415.40px;width:142px;height:20px;line-height:20px;font-size:13px;text-align:center;">66,5</div><div class="t" style="left:1227.50px;top:415.40px;width:142px;height:20px;line-height:20px;font-size:13px;text-align:center;">100,0</div><div class="t" style="left:1369.50px;top:415.40px;width:142px;height:20px;line-height:20px;font-size:13px;text-align:center;">0,0</div><div class="t" style="left:1511.50px;top:415.40px;width:142px;height:20px;line-height:20px;font-size:13px;text-align:center;">100,0</div><div class="t" style="left:1653.50px;top:415.40px;width:142px;height:20px;line-height:20px;font-size:13px;text-align:center;">16</div><div class="t" style="left:1795.50px;top:415.40px;width:142px;height:20px;line-height:20px;font-size:13px;text-align:center;">0</div><div style="left:25px;top:453px;width:472px;height:1px;background:#9cdafa"></div><div style="left:1653px;top:453px;width:245px;height:1px;background:#9cdafa"></div><div style="left:497px;top:433px;width:1px;height:21px;background:#9cdafa"></div><div style="left:1795px;top:433px;width:1px;height:21px;background:#9cdafa"></div><div class="t" style="left:26px;top:433px;width:167px;height:20px;line-height:20px"></div><div class="t" style="left:28.00px;top:435.40px;width:165px;height:20px;line-height:20px;font-size:13px;text-align:left;width:165px;overflow:hidden">Mini Countryman Plug-in Hybrid</div><div class="t" style="left:196.00px;top:435.40px;width:165px;height:20px;line-height:20px;font-size:13px;text-align:left;">Entire Organization</div><div class="t" style="left:361.50px;top:435.40px;width:136px;height:20px;line-height:20px;font-size:13px;text-align:center;">480,52</div><div style="left:1511px;top:433px;width:143px;height:21px;background:#f5a3b7;border:1px solid #e8194f"></div><div style="left:1369px;top:433px;width:143px;height:21px;background:#f5a3b7;border:1px solid #e8194f"></div><div style="left:1227px;top:433px;width:143px;height:21px;background:#d6e7b4;border:1px solid #92d050"></div><div style="left:1085px;top:433px;width:143px;height:21px;background:#f5a3b7;border:1px solid #e8194f"></div><div style="left:943px;top:433px;width:143px;height:21px;background:#ffeb9c;border:1px solid #ffcb00"></div><div style="left:801px;top:433px;width:143px;height:21px;background:#f5a3b7;border:1px solid #e8194f"></div><div style="left:633px;top:433px;width:169px;height:21px;background:#f5a3b7;border:1px solid #e8194f"></div><div style="left:497px;top:433px;width:137px;height:21px;background:#f5a3b7;border:1px solid #e8194f"></div><div class="t" style="left:497.50px;top:435.40px;width:136px;height:20px;line-height:20px;font-size:13px;text-align:center;">39,6</div><div class="t" style="left:633.50px;top:435.40px;width:168px;height:20px;line-height:20px;font-size:13px;text-align:center;">High Risk</div><div class="t" style="left:801.50px;top:435.40px;width:142px;height:20px;line-height:20px;font-size:13px;text-align:center;">0,0</div><div class="t" style="left:943.50px;top:435.40px;width:142px;height:20px;line-height:20px;font-size:13px;text-align:center;">86,6</div><div class="t" style="left:1085.50px;top:435.40px;width:142px;height:20px;line-height:20px;font-size:13px;text-align:center;">0,0</div><div class="t" style="left:1227.50px;top:435.40px;width:142px;height:20px;line-height:20px;font-size:13px;text-align:center;">100,0</div><div class="t" style="left:1369.50px;top:435.40px;width:142px;height:20px;line-height:20px;font-size:13px;text-align:center;">0,0</div><div class="t" style="left:1511.50px;top:435.40px;width:142px;height:20px;line-height:20px;font-size:13px;text-align:center;">36,4</div><div class="t" style="left:1653.50px;top:435.40px;width:142px;height:20px;line-height:20px;font-size:13px;text-align:center;">237</div><div class="t" style="left:1795.50px;top:435.40px;width:142px;height:20px;line-height:20px;font-size:13px;text-align:center;">31</div><div style="left:25px;top:473px;width:472px;height:1px;background:#9cdafa"></div><div style="left:1653px;top:473px;width:245px;height:1px;background:#9cdafa"></div><div style="left:497px;top:453px;width:1px;height:21px;background:#9cdafa"></div><div style="left:1795px;top:453px;width:1px;height:21px;background:#9cdafa"></div><div class="t" style="left:26px;top:453px;width:167px;height:20px;line-height:20px"></div><div class="t" style="left:28.00px;top:455.40px;width:165px;height:20px;line-height:20px;font-size:13px;text-align:left;width:165px;overflow:hidden">Toyota Aygo</div><div class="t" style="left:196.00px;top:455.40px;width:165px;height:20px;line-height:20px;font-size:13px;text-align:left;">Entire Organization</div><div class="t" style="left:361.50px;top:455.40px;width:136px;height:20px;line-height:20px;font-size:13px;text-align:center;">354,35</div><div style="left:1511px;top:453px;width:143px;height:21px;background:#f5a3b7;border:1px solid #e8194f"></div><div style="left:1369px;top:453px;width:143px;height:21px;background:#f5a3b7;border:1px solid #e8194f"></div><div style="left:1227px;top:453px;width:143px;height:21px;background:#f5a3b7;border:1px solid #e8194f"></div><div style="left:1085px;top:453px;width:143px;height:21px;background:#ffeb9c;border:1px solid #ffcb00"></div><div style="left:943px;top:453px;width:143px;height:21px;background:#d6e7b4;border:1px solid #92d050"></div><div style="left:801px;top:453px;width:143px;height:21px;background:#ffeb9c;border:1px solid #ffcb00"></div><div style="left:633px;top:453px;width:169px;height:21px;background:#f5a3b7;border:1px solid #e8194f"></div><div style="left:497px;top:453px;width:137px;height:21px;background:#f5a3b7;border:1px solid #e8194f"></div><div class="t" style="left:497.50px;top:455.40px;width:136px;height:20px;line-height:20px;font-size:13px;text-align:center;">43,2</div><div class="t" style="left:633.50px;top:455.40px;width:168px;height:20px;line-height:20px;font-size:13px;text-align:center;">High Risk</div><div class="t" style="left:801.50px;top:455.40px;width:142px;height:20px;line-height:20px;font-size:13px;text-align:center;">81,8</div><div class="t" style="left:943.50px;top:455.40px;width:142px;height:20px;line-height:20px;font-size:13px;text-align:center;">95,5</div><div class="t" style="left:1085.50px;top:455.40px;width:142px;height:20px;line-height:20px;font-size:13px;text-align:center;">86,4</div><div class="t" style="left:1227.50px;top:455.40px;width:142px;height:20px;line-height:20px;font-size:13px;text-align:center;">9,2</div><div class="t" style="left:1369.50px;top:455.40px;width:142px;height:20px;line-height:20px;font-size:13px;text-align:center;">0,0</div><div class="t" style="left:1511.50px;top:455.40px;width:142px;height:20px;line-height:20px;font-size:13px;text-align:center;">50,0</div><div class="t" style="left:1653.50px;top:455.40px;width:142px;height:20px;line-height:20px;font-size:13px;text-align:center;">70</div><div class="t" style="left:1795.50px;top:455.40px;width:142px;height:20px;line-height:20px;font-size:13px;text-align:center;">4</div><div style="left:25px;top:493px;width:472px;height:1px;background:#9cdafa"></div><div style="left:1653px;top:493px;width:245px;height:1px;background:#9cdafa"></div><div style="left:497px;top:473px;width:1px;height:21px;background:#9cdafa"></div><div style="left:1795px;top:473px;width:1px;height:21px;background:#9cdafa"></div><div class="t" style="left:26px;top:473px;width:167px;height:20px;line-height:20px"></div><div class="t" style="left:28.00px;top:475.40px;width:165px;height:20px;line-height:20px;font-size:13px;text-align:left;width:165px;overflow:hidden">Jeep Renegade</div><div class="t" style="left:196.00px;top:475.40px;width:165px;height:20px;line-height:20px;font-size:13px;text-align:left;">Entire Organization</div><div class="t" style="left:361.50px;top:475.40px;width:136px;height:20px;line-height:20px;font-size:13px;text-align:center;">274,13</div><div style="left:1511px;top:473px;width:143px;height:21px;background:#ffeb9c;border:1px solid #ffcb00"></div><div style="left:1369px;top:473px;width:143px;height:21px;background:#f5a3b7;border:1px solid #e8194f"></div><div style="left:1227px;top:473px;width:143px;height:21px;background:#d6e7b4;border:1px solid #92d050"></div><div style="left:1085px;top:473px;width:143px;height:21px;background:#ffeb9c;border:1px solid #ffcb00"></div><div style="left:943px;top:473px;width:143px;height:21px;background:#ffeb9c;border:1px solid #ffcb00"></div><div style="left:801px;top:473px;width:143px;height:21px;background:#ffeb9c;border:1px solid #ffcb00"></div><div style="left:633px;top:473px;width:169px;height:21px;background:#fdd59f;border:1px solid #ff9900"></div><div style="left:497px;top:473px;width:137px;height:21px;background:#fdd59f;border:1px solid #ff9900"></div><div class="t" style="left:497.50px;top:475.40px;width:136px;height:20px;line-height:20px;font-size:13px;text-align:center;">74,1</div><div class="t" style="left:633.50px;top:475.40px;width:168px;height:20px;line-height:20px;font-size:13px;text-align:center;">Medium Risk</div><div class="t" style="left:801.50px;top:475.40px;width:142px;height:20px;line-height:20px;font-size:13px;text-align:center;">76,5</div><div class="t" style="left:943.50px;top:475.40px;width:142px;height:20px;line-height:20px;font-size:13px;text-align:center;">94,1</div><div class="t" style="left:1085.50px;top:475.40px;width:142px;height:20px;line-height:20px;font-size:13px;text-align:center;">88,3</div><div class="t" style="left:1227.50px;top:475.40px;width:142px;height:20px;line-height:20px;font-size:13px;text-align:center;">100,0</div><div class="t" style="left:1369.50px;top:475.40px;width:142px;height:20px;line-height:20px;font-size:13px;text-align:center;">0,0</div><div class="t" style="left:1511.50px;top:475.40px;width:142px;height:20px;line-height:20px;font-size:13px;text-align:center;">94,1</div><div class="t" style="left:1653.50px;top:475.40px;width:142px;height:20px;line-height:20px;font-size:13px;text-align:center;">70</div><div class="t" style="left:1795.50px;top:475.40px;width:142px;height:20px;line-height:20px;font-size:13px;text-align:center;">4</div><div style="left:25px;top:513px;width:472px;height:1px;background:#9cdafa"></div><div style="left:1653px;top:513px;width:245px;height:1px;background:#9cdafa"></div><div style="left:497px;top:493px;width:1px;height:21px;background:#9cdafa"></div><div style="left:1795px;top:493px;width:1px;height:21px;background:#9cdafa"></div><div class="t" style="left:26px;top:493px;width:167px;height:20px;line-height:20px"></div><div class="t" style="left:28.00px;top:495.40px;width:165px;height:20px;line-height:20px;font-size:13px;text-align:left;width:165px;overflow:hidden">Nissan Qashqai</div><div class="t" style="left:196.00px;top:495.40px;width:165px;height:20px;line-height:20px;font-size:13px;text-align:left;">Stock, Test Webinar</div><div class="t" style="left:361.50px;top:495.40px;width:136px;height:20px;line-height:20px;font-size:13px;text-align:center;">81,98</div><div style="left:1511px;top:493px;width:143px;height:21px;background:#d6e7b4;border:1px solid #92d050"></div><div style="left:1369px;top:493px;width:143px;height:21px;background:#f5a3b7;border:1px solid #e8194f"></div><div style="left:1227px;top:493px;width:143px;height:21px;background:#d6e7b4;border:1px solid #92d050"></div><div style="left:1085px;top:493px;width:143px;height:21px;background:#f5a3b7;border:1px solid #e8194f"></div><div style="left:943px;top:493px;width:143px;height:21px;background:#d6e7b4;border:1px solid #92d050"></div><div style="left:801px;top:493px;width:143px;height:21px;background:#d6e7b4;border:1px solid #92d050"></div><div style="left:633px;top:493px;width:169px;height:21px;background:#ffeb9c;border:1px solid #ffcb00"></div><div style="left:497px;top:493px;width:137px;height:21px;background:#ffeb9c;border:1px solid #ffcb00"></div><div class="t" style="left:497.50px;top:495.40px;width:136px;height:20px;line-height:20px;font-size:13px;text-align:center;">82,3</div><div class="t" style="left:633.50px;top:495.40px;width:168px;height:20px;line-height:20px;font-size:13px;text-align:center;">Mild Risk</div><div class="t" style="left:801.50px;top:495.40px;width:142px;height:20px;line-height:20px;font-size:13px;text-align:center;">100,0</div><div class="t" style="left:943.50px;top:495.40px;width:142px;height:20px;line-height:20px;font-size:13px;text-align:center;">100,0</div><div class="t" style="left:1085.50px;top:495.40px;width:142px;height:20px;line-height:20px;font-size:13px;text-align:center;">41,1</div><div class="t" style="left:1227.50px;top:495.40px;width:142px;height:20px;line-height:20px;font-size:13px;text-align:center;">100,0</div><div class="t" style="left:1369.50px;top:495.40px;width:142px;height:20px;line-height:20px;font-size:13px;text-align:center;">41,1</div><div class="t" style="left:1511.50px;top:495.40px;width:142px;height:20px;line-height:20px;font-size:13px;text-align:center;">100,0</div><div class="t" style="left:1653.50px;top:495.40px;width:142px;height:20px;line-height:20px;font-size:13px;text-align:center;">6</div><div class="t" style="left:1795.50px;top:495.40px;width:142px;height:20px;line-height:20px;font-size:13px;text-align:center;">0</div><div style="left:25px;top:533px;width:472px;height:1px;background:#9cdafa"></div><div style="left:1653px;top:533px;width:245px;height:1px;background:#9cdafa"></div><div style="left:497px;top:513px;width:1px;height:21px;background:#9cdafa"></div><div style="left:1795px;top:513px;width:1px;height:21px;background:#9cdafa"></div><div class="t" style="left:26px;top:513px;width:167px;height:20px;line-height:20px"></div><div class="t" style="left:28.00px;top:515.40px;width:165px;height:20px;line-height:20px;font-size:13px;text-align:left;width:165px;overflow:hidden">Test Banco Griffin</div><div class="t" style="left:196.00px;top:515.40px;width:165px;height:20px;line-height:20px;font-size:13px;text-align:left;">Entire Organization</div><div class="t" style="left:361.50px;top:515.40px;width:136px;height:20px;line-height:20px;font-size:13px;text-align:center;">8,94</div><div style="left:1511px;top:513px;width:143px;height:21px;background:#d6e7b4;border:1px solid #92d050"></div><div style="left:1369px;top:513px;width:143px;height:21px;background:#d6e7b4;border:1px solid #92d050"></div><div style="left:1227px;top:513px;width:143px;height:21px;background:#d6e7b4;border:1px solid #92d050"></div><div style="left:1085px;top:513px;width:143px;height:21px;background:#d6e7b4;border:1px solid #92d050"></div><div style="left:943px;top:513px;width:143px;height:21px;background:#d6e7b4;border:1px solid #92d050"></div><div style="left:801px;top:513px;width:143px;height:21px;background:#d6e7b4;border:1px solid #92d050"></div><div style="left:633px;top:513px;width:169px;height:21px;background:#d6e7b4;border:1px solid #92d050"></div><div style="left:497px;top:513px;width:137px;height:21px;background:#d6e7b4;border:1px solid #92d050"></div><div class="t" style="left:497.50px;top:515.40px;width:136px;height:20px;line-height:20px;font-size:13px;text-align:center;">100,0</div><div class="t" style="left:633.50px;top:515.40px;width:168px;height:20px;line-height:20px;font-size:13px;text-align:center;">Low Risk</div><div class="t" style="left:801.50px;top:515.40px;width:142px;height:20px;line-height:20px;font-size:13px;text-align:center;">100,0</div><div class="t" style="left:943.50px;top:515.40px;width:142px;height:20px;line-height:20px;font-size:13px;text-align:center;">100,0</div><div class="t" style="left:1085.50px;top:515.40px;width:142px;height:20px;line-height:20px;font-size:13px;text-align:center;">100,0</div><div class="t" style="left:1227.50px;top:515.40px;width:142px;height:20px;line-height:20px;font-size:13px;text-align:center;">100,0</div><div class="t" style="left:1369.50px;top:515.40px;width:142px;height:20px;line-height:20px;font-size:13px;text-align:center;">100,0</div><div class="t" style="left:1511.50px;top:515.40px;width:142px;height:20px;line-height:20px;font-size:13px;text-align:center;">100,0</div><div class="t" style="left:1653.50px;top:515.40px;width:142px;height:20px;line-height:20px;font-size:13px;text-align:center;">0</div><div class="t" style="left:1795.50px;top:515.40px;width:142px;height:20px;line-height:20px;font-size:13px;text-align:center;">0</div><div style="left:25px;top:553px;width:472px;height:1px;background:#9cdafa"></div><div style="left:1653px;top:553px;width:245px;height:1px;background:#9cdafa"></div><div style="left:497px;top:533px;width:1px;height:21px;background:#9cdafa"></div><div style="left:1795px;top:533px;width:1px;height:21px;background:#9cdafa"></div><div class="t" style="left:26px;top:533px;width:167px;height:20px;line-height:20px"></div><div class="t" style="left:28.00px;top:535.40px;width:165px;height:20px;line-height:20px;font-size:13px;text-align:left;width:165px;overflow:hidden">Peugeot 206 (Flavia)</div><div class="t" style="left:196.00px;top:535.40px;width:165px;height:20px;line-height:20px;font-size:13px;text-align:left;">Entire Organization</div><div class="t" style="left:361.50px;top:535.40px;width:136px;height:20px;line-height:20px;font-size:13px;text-align:center;">142,40</div><div style="left:1511px;top:533px;width:143px;height:21px;background:#d6e7b4;border:1px solid #92d050"></div><div style="left:1369px;top:533px;width:143px;height:21px;background:#f5a3b7;border:1px solid #e8194f"></div><div style="left:1227px;top:533px;width:143px;height:21px;background:#d6e7b4;border:1px solid #92d050"></div><div style="left:1085px;top:533px;width:143px;height:21px;background:#fdd59f;border:1px solid #ff9900"></div><div style="left:943px;top:533px;width:143px;height:21px;background:#d6e7b4;border:1px solid #92d050"></div><div style="left:801px;top:533px;width:143px;height:21px;background:#ffeb9c;border:1px solid #ffcb00"></div><div style="left:633px;top:533px;width:169px;height:21px;background:#ffeb9c;border:1px solid #ffcb00"></div><div style="left:497px;top:533px;width:137px;height:21px;background:#ffeb9c;border:1px solid #ffcb00"></div><div class="t" style="left:497.50px;top:535.40px;width:136px;height:20px;line-height:20px;font-size:13px;text-align:center;">75,5</div><div class="t" style="left:633.50px;top:535.40px;width:168px;height:20px;line-height:20px;font-size:13px;text-align:center;">Mild Risk</div><div class="t" style="left:801.50px;top:535.40px;width:142px;height:20px;line-height:20px;font-size:13px;text-align:center;">88,7</div><div class="t" style="left:943.50px;top:535.40px;width:142px;height:20px;line-height:20px;font-size:13px;text-align:center;">100,0</div><div class="t" style="left:1085.50px;top:535.40px;width:142px;height:20px;line-height:20px;font-size:13px;text-align:center;">66,1</div><div class="t" style="left:1227.50px;top:535.40px;width:142px;height:20px;line-height:20px;font-size:13px;text-align:center;">100,0</div><div class="t" style="left:1369.50px;top:535.40px;width:142px;height:20px;line-height:20px;font-size:13px;text-align:center;">0,0</div><div class="t" style="left:1511.50px;top:535.40px;width:142px;height:20px;line-height:20px;font-size:13px;text-align:center;">100,0</div><div class="t" style="left:1653.50px;top:535.40px;width:142px;height:20px;line-height:20px;font-size:13px;text-align:center;">40</div><div class="t" style="left:1795.50px;top:535.40px;width:142px;height:20px;line-height:20px;font-size:13px;text-align:center;">1</div><div style="left:25px;top:573px;width:472px;height:1px;background:#9cdafa"></div><div style="left:1653px;top:573px;width:245px;height:1px;background:#9cdafa"></div><div style="left:497px;top:553px;width:1px;height:21px;background:#9cdafa"></div><div style="left:1795px;top:553px;width:1px;height:21px;background:#9cdafa"></div><div class="t" style="left:26px;top:553px;width:167px;height:20px;line-height:20px"></div><div class="t" style="left:28.00px;top:555.40px;width:165px;height:20px;line-height:20px;font-size:13px;text-align:left;width:165px;overflow:hidden">Toyota Prius</div><div class="t" style="left:196.00px;top:555.40px;width:165px;height:20px;line-height:20px;font-size:13px;text-align:left;">Entire Organization</div><div class="t" style="left:361.50px;top:555.40px;width:136px;height:20px;line-height:20px;font-size:13px;text-align:center;">426,65</div><div style="left:1511px;top:553px;width:143px;height:21px;background:#f5a3b7;border:1px solid #e8194f"></div><div style="left:1369px;top:553px;width:143px;height:21px;background:#f5a3b7;border:1px solid #e8194f"></div><div style="left:1227px;top:553px;width:143px;height:21px;background:#d6e7b4;border:1px solid #92d050"></div><div style="left:1085px;top:553px;width:143px;height:21px;background:#d6e7b4;border:1px solid #92d050"></div><div style="left:943px;top:553px;width:143px;height:21px;background:#ffeb9c;border:1px solid #ffcb00"></div><div style="left:801px;top:553px;width:143px;height:21px;background:#ffeb9c;border:1px solid #ffcb00"></div><div style="left:633px;top:553px;width:169px;height:21px;background:#f5a3b7;border:1px solid #e8194f"></div><div style="left:497px;top:553px;width:137px;height:21px;background:#f5a3b7;border:1px solid #e8194f"></div><div class="t" style="left:497.50px;top:555.40px;width:136px;height:20px;line-height:20px;font-size:13px;text-align:center;">58,9</div><div class="t" style="left:633.50px;top:555.40px;width:168px;height:20px;line-height:20px;font-size:13px;text-align:center;">High Risk</div><div class="t" style="left:801.50px;top:555.40px;width:142px;height:20px;line-height:20px;font-size:13px;text-align:center;">92,5</div><div class="t" style="left:943.50px;top:555.40px;width:142px;height:20px;line-height:20px;font-size:13px;text-align:center;">92,5</div><div class="t" style="left:1085.50px;top:555.40px;width:142px;height:20px;line-height:20px;font-size:13px;text-align:center;">100,0</div><div class="t" style="left:1227.50px;top:555.40px;width:142px;height:20px;line-height:20px;font-size:13px;text-align:center;">96,2</div><div class="t" style="left:1369.50px;top:555.40px;width:142px;height:20px;line-height:20px;font-size:13px;text-align:center;">1,9</div><div class="t" style="left:1511.50px;top:555.40px;width:142px;height:20px;line-height:20px;font-size:13px;text-align:center;">35,9</div><div class="t" style="left:1653.50px;top:555.40px;width:142px;height:20px;line-height:20px;font-size:13px;text-align:center;">48</div><div class="t" style="left:1795.50px;top:555.40px;width:142px;height:20px;line-height:20px;font-size:13px;text-align:center;">2</div><div style="left:25px;top:593px;width:472px;height:1px;background:#9cdafa"></div><div style="left:1653px;top:593px;width:245px;height:1px;background:#9cdafa"></div><div style="left:497px;top:573px;width:1px;height:21px;background:#9cdafa"></div><div style="left:1795px;top:573px;width:1px;height:21px;background:#9cdafa"></div><div class="t" style="left:26px;top:573px;width:167px;height:20px;line-height:20px"></div><div class="t" style="left:28.00px;top:575.40px;width:165px;height:20px;line-height:20px;font-size:13px;text-align:left;width:165px;overflow:hidden">Opel Corsa</div><div class="t" style="left:196.00px;top:575.40px;width:165px;height:20px;line-height:20px;font-size:13px;text-align:left;">Entire Organization</div><div class="t" style="left:361.50px;top:575.40px;width:136px;height:20px;line-height:20px;font-size:13px;text-align:center;">372,05</div><div style="left:1511px;top:573px;width:143px;height:21px;background:#fdd59f;border:1px solid #ff9900"></div><div style="left:1369px;top:573px;width:143px;height:21px;background:#f5a3b7;border:1px solid #e8194f"></div><div style="left:1227px;top:573px;width:143px;height:21px;background:#f5a3b7;border:1px solid #e8194f"></div><div style="left:1085px;top:573px;width:143px;height:21px;background:#f5a3b7;border:1px solid #e8194f"></div><div style="left:943px;top:573px;width:143px;height:21px;background:#d6e7b4;border:1px solid #92d050"></div><div style="left:801px;top:573px;width:143px;height:21px;background:#ffeb9c;border:1px solid #ffcb00"></div><div style="left:633px;top:573px;width:169px;height:21px;background:#f5a3b7;border:1px solid #e8194f"></div><div style="left:497px;top:573px;width:137px;height:21px;background:#f5a3b7;border:1px solid #e8194f"></div><div class="t" style="left:497.50px;top:575.40px;width:136px;height:20px;line-height:20px;font-size:13px;text-align:center;">42,7</div><div class="t" style="left:633.50px;top:575.40px;width:168px;height:20px;line-height:20px;font-size:13px;text-align:center;">High Risk</div><div class="t" style="left:801.50px;top:575.40px;width:142px;height:20px;line-height:20px;font-size:13px;text-align:center;">78,4</div><div class="t" style="left:943.50px;top:575.40px;width:142px;height:20px;line-height:20px;font-size:13px;text-align:center;">100,0</div><div class="t" style="left:1085.50px;top:575.40px;width:142px;height:20px;line-height:20px;font-size:13px;text-align:center;">52,4</div><div class="t" style="left:1227.50px;top:575.40px;width:142px;height:20px;line-height:20px;font-size:13px;text-align:center;">0,0</div><div class="t" style="left:1369.50px;top:575.40px;width:142px;height:20px;line-height:20px;font-size:13px;text-align:center;">0,0</div><div class="t" style="left:1511.50px;top:575.40px;width:142px;height:20px;line-height:20px;font-size:13px;text-align:center;">65,4</div><div class="t" style="left:1653.50px;top:575.40px;width:142px;height:20px;line-height:20px;font-size:13px;text-align:center;">264</div><div class="t" style="left:1795.50px;top:575.40px;width:142px;height:20px;line-height:20px;font-size:13px;text-align:center;">5</div><div style="left:25px;top:613px;width:472px;height:1px;background:#9cdafa"></div><div style="left:1653px;top:613px;width:245px;height:1px;background:#9cdafa"></div><div style="left:497px;top:593px;width:1px;height:21px;background:#9cdafa"></div><div style="left:1795px;top:593px;width:1px;height:21px;background:#9cdafa"></div><div class="t" style="left:26px;top:593px;width:167px;height:20px;line-height:20px"></div><div class="t" style="left:28.00px;top:595.40px;width:165px;height:20px;line-height:20px;font-size:13px;text-align:left;width:165px;overflow:hidden">Peugeot 5008</div><div class="t" style="left:196.00px;top:595.40px;width:165px;height:20px;line-height:20px;font-size:13px;text-align:left;">Entire Organization</div><div class="t" style="left:361.50px;top:595.40px;width:136px;height:20px;line-height:20px;font-size:13px;text-align:center;">12,80</div><div style="left:1511px;top:593px;width:143px;height:21px;background:#d6e7b4;border:1px solid #92d050"></div><div style="left:1369px;top:593px;width:143px;height:21px;background:#d6e7b4;border:1px solid #92d050"></div><div style="left:1227px;top:593px;width:143px;height:21px;background:#f5a3b7;border:1px solid #e8194f"></div><div style="left:1085px;top:593px;width:143px;height:21px;background:#f5a3b7;border:1px solid #e8194f"></div><div style="left:943px;top:593px;width:143px;height:21px;background:#d6e7b4;border:1px solid #92d050"></div><div style="left:801px;top:593px;width:143px;height:21px;background:#d6e7b4;border:1px solid #92d050"></div><div style="left:633px;top:593px;width:169px;height:21px;background:#fdd59f;border:1px solid #ff9900"></div><div style="left:497px;top:593px;width:137px;height:21px;background:#fdd59f;border:1px solid #ff9900"></div><div class="t" style="left:497.50px;top:595.40px;width:136px;height:20px;line-height:20px;font-size:13px;text-align:center;">70,0</div><div class="t" style="left:633.50px;top:595.40px;width:168px;height:20px;line-height:20px;font-size:13px;text-align:center;">Medium Risk</div><div class="t" style="left:801.50px;top:595.40px;width:142px;height:20px;line-height:20px;font-size:13px;text-align:center;">100,0</div><div class="t" style="left:943.50px;top:595.40px;width:142px;height:20px;line-height:20px;font-size:13px;text-align:center;">100,0</div><div class="t" style="left:1085.50px;top:595.40px;width:142px;height:20px;line-height:20px;font-size:13px;text-align:center;">0,0</div><div class="t" style="left:1227.50px;top:595.40px;width:142px;height:20px;line-height:20px;font-size:13px;text-align:center;">0,0</div><div class="t" style="left:1369.50px;top:595.40px;width:142px;height:20px;line-height:20px;font-size:13px;text-align:center;">100,0</div><div class="t" style="left:1511.50px;top:595.40px;width:142px;height:20px;line-height:20px;font-size:13px;text-align:center;">100,0</div><div class="t" style="left:1653.50px;top:595.40px;width:142px;height:20px;line-height:20px;font-size:13px;text-align:center;">10</div><div class="t" style="left:1795.50px;top:595.40px;width:142px;height:20px;line-height:20px;font-size:13px;text-align:center;">0</div><div style="left:25px;top:633px;width:472px;height:1px;background:#9cdafa"></div><div style="left:1653px;top:633px;width:245px;height:1px;background:#9cdafa"></div><div style="left:497px;top:613px;width:1px;height:21px;background:#9cdafa"></div><div style="left:1795px;top:613px;width:1px;height:21px;background:#9cdafa"></div><div class="t" style="left:26px;top:613px;width:167px;height:20px;line-height:20px"></div><div class="t" style="left:28.00px;top:615.40px;width:165px;height:20px;line-height:20px;font-size:13px;text-align:left;width:165px;overflow:hidden">Fiat 500X</div><div class="t" style="left:196.00px;top:615.40px;width:165px;height:20px;line-height:20px;font-size:13px;text-align:left;">Entire Organization</div><div class="t" style="left:361.50px;top:615.40px;width:136px;height:20px;line-height:20px;font-size:13px;text-align:center;">261,47</div><div style="left:1511px;top:613px;width:143px;height:21px;background:#ffeb9c;border:1px solid #ffcb00"></div><div style="left:1369px;top:613px;width:143px;height:21px;background:#f5a3b7;border:1px solid #e8194f"></div><div style="left:1227px;top:613px;width:143px;height:21px;background:#d6e7b4;border:1px solid #92d050"></div><div style="left:1085px;top:613px;width:143px;height:21px;background:#ffeb9c;border:1px solid #ffcb00"></div><div style="left:943px;top:613px;width:143px;height:21px;background:#d6e7b4;border:1px solid #92d050"></div><div style="left:801px;top:613px;width:143px;height:21px;background:#d6e7b4;border:1px solid #92d050"></div><div style="left:633px;top:613px;width:169px;height:21px;background:#ffeb9c;border:1px solid #ffcb00"></div><div style="left:497px;top:613px;width:137px;height:21px;background:#ffeb9c;border:1px solid #ffcb00"></div><div class="t" style="left:497.50px;top:615.40px;width:136px;height:20px;line-height:20px;font-size:13px;text-align:center;">76,3</div><div class="t" style="left:633.50px;top:615.40px;width:168px;height:20px;line-height:20px;font-size:13px;text-align:center;">Mild Risk</div><div class="t" style="left:801.50px;top:615.40px;width:142px;height:20px;line-height:20px;font-size:13px;text-align:center;">100,0</div><div class="t" style="left:943.50px;top:615.40px;width:142px;height:20px;line-height:20px;font-size:13px;text-align:center;">100,0</div><div class="t" style="left:1085.50px;top:615.40px;width:142px;height:20px;line-height:20px;font-size:13px;text-align:center;">81,5</div><div class="t" style="left:1227.50px;top:615.40px;width:142px;height:20px;line-height:20px;font-size:13px;text-align:center;">100,0</div><div class="t" style="left:1369.50px;top:615.40px;width:142px;height:20px;line-height:20px;font-size:13px;text-align:center;">0,0</div><div class="t" style="left:1511.50px;top:615.40px;width:142px;height:20px;line-height:20px;font-size:13px;text-align:center;">93,8</div><div class="t" style="left:1653.50px;top:615.40px;width:142px;height:20px;line-height:20px;font-size:13px;text-align:center;">36</div><div class="t" style="left:1795.50px;top:615.40px;width:142px;height:20px;line-height:20px;font-size:13px;text-align:center;">0</div><div style="left:26px;top:413px;width:1872px;height:1px;background:#8f98a8"></div></div><div style="left:25px;top:64px;width:1px;height:590px;background:#a8a8a8"></div>
</body></html>
